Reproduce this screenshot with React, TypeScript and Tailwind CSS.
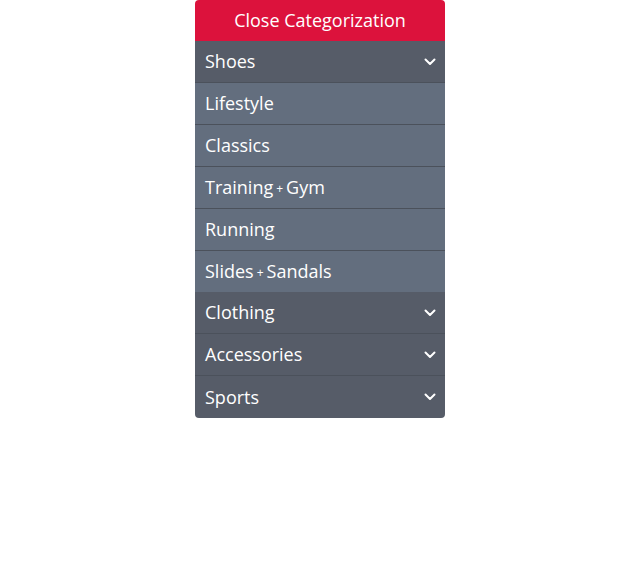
import React from "react";

const Chevron = () => (
  <svg width="12" height="8" viewBox="0 0 12 8" fill="none" className="mr-[-1px]">
    <path d="M1.5 1.5 L6 6 L10.5 1.5" stroke="white" strokeWidth="2" strokeLinecap="round" strokeLinejoin="round" />
  </svg>
);

const Row = ({ label, dark, chevron, noBorder, last }: { label: React.ReactNode; dark?: boolean; chevron?: boolean; noBorder?: boolean; last?: boolean }) => (
  <div
    className={`flex items-center justify-between px-[10px] text-[18px] text-white ${
      dark ? "bg-[#565c68]" : "bg-[#636e7e]"
    } ${last ? "h-[42px] rounded-b-[4px]" : noBorder ? "h-[41px]" : "h-[42px] border-b border-[#4b515b]"}`}
  >
    <span>{label}</span>
    {chevron && <Chevron />}
  </div>
);

const Plus = () => <span className="text-[12px] mx-[3px] relative top-[-1px]">+</span>;

export default function App() {
  return (
    <div className="flex w-[626px] h-[565px] bg-white" style={{ fontFamily: "'Open Sans', 'Noto Sans', sans-serif" }}>
      <div className="ml-[195px] w-[250px] flex flex-col self-start">
        <div className="flex h-[41px] items-center justify-center rounded-t-[4px] bg-[#dc123c] text-[18px] text-white">
          Close Categorization
        </div>
        <Row label="Shoes" dark chevron />
        <Row label="Lifestyle" />
        <Row label="Classics" />
        <Row label={<>Training<Plus />Gym</>} />
        <Row label="Running" />
        <Row label={<>Slides<Plus />Sandals</>} noBorder />
        <Row label="Clothing" dark chevron />
        <Row label="Accessories" dark chevron />
        <Row label="Sports" dark chevron last />
      </div>
    </div>
  );
}
